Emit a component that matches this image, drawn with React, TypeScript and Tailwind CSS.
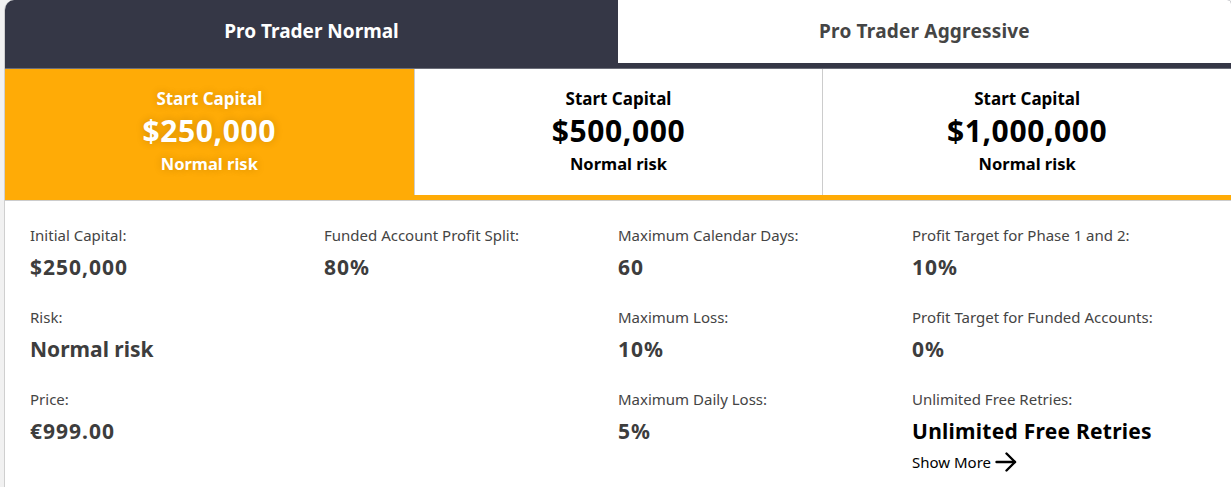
import React from "react";

type Item = { label: string; value: string; kind?: "text" | "special" };

const columns: Item[][] = [
  [
    { label: "Initial Capital:", value: "$250,000" },
    { label: "Risk:", value: "Normal risk", kind: "text" },
    { label: "Price:", value: "€999.00" },
  ],
  [{ label: "Funded Account Profit Split:", value: "80%" }],
  [
    { label: "Maximum Calendar Days:", value: "60" },
    { label: "Maximum Loss:", value: "10%" },
    { label: "Maximum Daily Loss:", value: "5%" },
  ],
  [
    { label: "Profit Target for Phase 1 and 2:", value: "10%" },
    { label: "Profit Target for Funded Accounts:", value: "0%" },
    { label: "Unlimited Free Retries:", value: "Unlimited Free Retries", kind: "special" },
  ],
];

const cards = [
  { amount: "$250,000", active: true },
  { amount: "$500,000", active: false },
  { amount: "$1,000,000", active: false },
];

function Arrow() {
  return (
    <svg width="22" height="20" viewBox="0 0 22 20" fill="none" stroke="currentColor" strokeWidth="2.4" strokeLinecap="round" strokeLinejoin="round">
      <path d="M1.5 10H20" />
      <path d="M11.5 1.5L20 10L11.5 18.5" />
    </svg>
  );
}

export default function App() {
  return (
    <div
      className="w-full h-[487px] overflow-hidden bg-[#f1f1f1] pl-[4px]"
      style={{ fontFamily: "'Noto Sans', Lato, sans-serif" }}
    >
      <div className="h-full bg-white border-l border-[#cfcfcf] rounded-tl-[10px] rounded-tr-[4px] overflow-hidden">
        {/* Tabs */}
        <div className="flex h-[68px] bg-[#353746] border-b border-[#6c6e79] box-content">
          <div className="w-1/2 flex items-center justify-center pb-[5px] text-white text-[19px] font-bold">
            Pro Trader Normal
          </div>
          <div className="w-1/2 h-[63px] bg-white flex items-center justify-center text-[#454545] text-[19px] font-bold tracking-[0.2px]">
            Pro Trader Aggressive
          </div>
        </div>

        {/* Capital cards */}
        <div className="grid grid-cols-3 bg-[#ffab06] pb-[5px] border-b border-[#cccccc]">
          {cards.map((c, i) => (
            <div
              key={i}
              className={
                c.active
                  ? "h-[126px] flex flex-col items-center justify-center text-white font-bold [text-shadow:0_0_8px_rgba(0,0,0,0.18)]"
                  : "h-[126px] flex flex-col items-center justify-center text-black font-bold bg-white border-l border-[#cccccc]"
              }
            >
              <div className="text-[17px] leading-[24px]">Start Capital</div>
              <div className="text-[30px] leading-[40px] tracking-[0.6px]">{c.amount}</div>
              <div className="text-[16.5px] leading-[26px]">Normal risk</div>
            </div>
          ))}
        </div>

        {/* Details */}
        <div className="grid grid-cols-4 px-[25px] pt-[24px]">
          {columns.map((col, ci) => (
            <div key={ci} className="flex flex-col gap-[26px]">
              {col.map((it, ii) => (
                <div key={ii} className="flex flex-col">
                  <div className="text-[15px] leading-[20px] text-[#444444]">{it.label}</div>
                  {it.kind === "special" ? (
                    <>
                      <div className="mt-[8px] text-[21px] leading-[28px] font-bold tracking-[0.25px] text-black">{it.value}</div>
                      <div className="mt-[7px] flex items-center gap-[4px] text-[15px] leading-[20px] text-black">
                        <span>Show More</span>
                        <Arrow />
                      </div>
                    </>
                  ) : it.kind === "text" ? (
                    <div className="mt-[8px] text-[21px] leading-[28px] font-bold text-[#3d3d3d]">{it.value}</div>
                  ) : (
                    <div className="mt-[8px] text-[21px] leading-[28px] font-bold tracking-[1px] text-[#3d3d3d]">{it.value}</div>
                  )}
                </div>
              ))}
            </div>
          ))}
        </div>
      </div>
    </div>
  );
}
